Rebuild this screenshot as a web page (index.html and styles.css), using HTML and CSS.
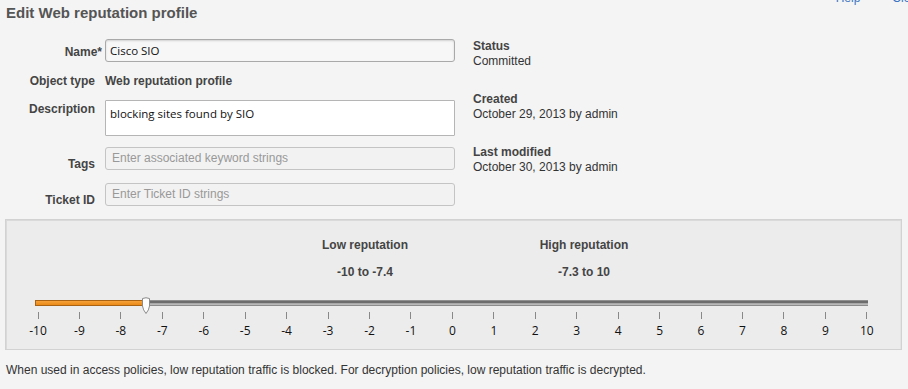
FILE: index.html
```html
<!DOCTYPE html>
<html>
<head>
<meta charset="utf-8">
<link rel="stylesheet" href="styles.css">
</head>
<body>
<div class="topbar"><a class="toplink">Help</a><a class="toplink">Close</a></div>
<h1 class="title">Edit Web reputation profile</h1>
<div class="main">
  <div class="form">
    <div class="row row-name">
      <div class="label label-name">Name*</div>
      <div class="input input-text">Cisco SIO</div>
    </div>
    <div class="row row-type">
      <div class="label">Object type</div>
      <div class="value">Web reputation profile</div>
    </div>
    <div class="row row-desc">
      <div class="label label-top">Description</div>
      <div class="input textarea input-text">blocking sites found by SIO</div>
    </div>
    <div class="row row-tags">
      <div class="label label-low">Tags</div>
      <div class="input placeholder">Enter associated keyword strings</div>
    </div>
    <div class="row row-ticket">
      <div class="label label-low">Ticket ID</div>
      <div class="input placeholder">Enter Ticket ID strings</div>
    </div>
  </div>
  <div class="meta">
    <div class="meta-group"><div class="meta-key">Status</div><div class="meta-val">Committed</div></div>
    <div class="meta-group"><div class="meta-key">Created</div><div class="meta-val">October 29, 2013 by admin</div></div>
    <div class="meta-group"><div class="meta-key">Last modified</div><div class="meta-val">October 30, 2013 by admin</div></div>
  </div>
</div>
<div class="panel">
  <div class="ranges">
    <div class="range"><div class="range-title">Low reputation</div><div class="range-val">-10 to -7.4</div></div>
    <div class="range"><div class="range-title">High reputation</div><div class="range-val">-7.3 to 10</div></div>
  </div>
  <div class="slider">
    <div class="track"><div class="fill"></div>
      <svg class="thumb" width="14" height="17" viewBox="0 0 14 17"><path d="M3.5 1.5 Q7 0 10.5 1.5 L10.5 9 Q10 13 7 16.5 Q4 13 3.5 9 Z" fill="#fdfdfd" stroke="#8a8a8a" stroke-width="1"/></svg>
    </div>
  </div>
  <div class="ticks">
    <div class="tick"><span class="mark"></span><span class="num">-10</span></div>
    <div class="tick"><span class="mark"></span><span class="num">-9</span></div>
    <div class="tick"><span class="mark"></span><span class="num">-8</span></div>
    <div class="tick"><span class="mark"></span><span class="num">-7</span></div>
    <div class="tick"><span class="mark"></span><span class="num">-6</span></div>
    <div class="tick"><span class="mark"></span><span class="num">-5</span></div>
    <div class="tick"><span class="mark"></span><span class="num">-4</span></div>
    <div class="tick"><span class="mark"></span><span class="num">-3</span></div>
    <div class="tick"><span class="mark"></span><span class="num">-2</span></div>
    <div class="tick"><span class="mark"></span><span class="num">-1</span></div>
    <div class="tick"><span class="mark"></span><span class="num">0</span></div>
    <div class="tick"><span class="mark"></span><span class="num">1</span></div>
    <div class="tick"><span class="mark"></span><span class="num">2</span></div>
    <div class="tick"><span class="mark"></span><span class="num">3</span></div>
    <div class="tick"><span class="mark"></span><span class="num">4</span></div>
    <div class="tick"><span class="mark"></span><span class="num">5</span></div>
    <div class="tick"><span class="mark"></span><span class="num">6</span></div>
    <div class="tick"><span class="mark"></span><span class="num">7</span></div>
    <div class="tick"><span class="mark"></span><span class="num">8</span></div>
    <div class="tick"><span class="mark"></span><span class="num">9</span></div>
    <div class="tick"><span class="mark"></span><span class="num">10</span></div>
  </div>
</div>
<p class="footer">When used in access policies, low reputation traffic is blocked. For decryption policies, low reputation traffic is decrypted.</p>
</body>
</html>
```
FILE: styles.css
```css
html, body {
  margin: 0;
  padding: 0;
  background: #f4f4f4;
  font-family: "Liberation Sans", Arial, sans-serif;
  font-size: 12px;
  color: #333;
  overflow: hidden;
}
.topbar {
  height: 14px;
  margin-top: -9px;
  display: flex;
  justify-content: flex-end;
  gap: 32px;
  margin-right: -15px;
}
.toplink {
  color: #3a76c4;
  font-size: 12px;
  line-height: 14px;
}
.title {
  margin: -1px 0 0 0;
  padding-left: 6px;
  font-size: 15px;
  line-height: 18px;
  font-weight: bold;
  color: #555;
  height: 18px;
}
.main {
  display: flex;
  margin-top: 17px;
}
.form {
  width: 455px;
}
.row {
  display: grid;
  grid-template-columns: 95px 350px;
  column-gap: 10px;
}
.label {
  text-align: right;
  font-weight: bold;
  color: #444;
  line-height: 14px;
  align-self: center;
  white-space: nowrap;
}
.label-name { margin-right: -7px; padding-top: 3px; }
.label-top { align-self: start; padding-top: 2px; }
.label-low { align-self: end; margin-bottom: -1px; }
.value {
  font-weight: bold;
  color: #444;
  line-height: 14px;
}
.input {
  box-sizing: border-box;
  height: 23px;
  border: 1px solid #a9a9a9;
  border-radius: 3px;
  background: #f7f7f7;
  box-shadow: inset 0 1px 2px rgba(0,0,0,0.15);
  padding: 3px 6px 0 6px;
  line-height: 15px;
}
.input-text {
  font-family: "Open Sans", "DejaVu Sans", sans-serif;
  font-size: 11.5px;
  color: #111;
  padding-left: 4px;
}
.textarea {
  height: 36px;
  background: #fff;
  border-radius: 1px;
  box-shadow: none;
  border-color: #b5b5b5;
  padding-top: 5px;
}
.placeholder {
  color: #999;
  font-size: 12px;
  background: #f2f2f2;
  border-color: #c4c4c4;
  box-shadow: none;
}
.row-type { margin-top: 12px; }
.row-desc { margin-top: 12px; }
.row-tags { margin-top: 11px; }
.row-ticket { margin-top: 13px; }
.meta {
  margin-left: 18px;
  margin-top: 0px;
}
.meta-group {
  margin-bottom: 23px;
}
.meta-key {
  font-weight: bold;
  color: #444;
  line-height: 15px;
}
.meta-val {
  color: #333;
  line-height: 15px;
}
.panel {
  box-sizing: border-box;
  margin: 13px 0 0 5px;
  width: 897px;
  height: 131px;
  background: #ececec;
  border: 1px solid #d2d2d2;
  box-shadow: inset 1px 1px 0 #dadada, inset -1px 0 0 #e4e4e4;
  padding-top: 18px;
  position: relative;
}
.ranges {
  display: flex;
  padding-left: 279px;
  gap: 59px;
}
.range {
  width: 160px;
  text-align: center;
  font-weight: bold;
  color: #444;
}
.range-title { line-height: 14px; }
.range-val { line-height: 14px; margin-top: 13px; }
.slider {
  margin-top: 21px;
  padding-left: 29px;
}
.track {
  position: relative;
  width: 833px;
  height: 6px;
  box-sizing: border-box;
  background: linear-gradient(#8f8f8f 0, #8f8f8f 1px, #6d6d6d 1px, #6d6d6d 3px, #a8a8a8 3px, #a8a8a8 4px, #b9b9b9 4px, #b9b9b9 5px, #8c8c8c 5px);
}
.fill {
  position: absolute;
  left: 0;
  top: 0;
  width: 111px;
  height: 6px;
  box-sizing: border-box;
  border: 1px solid #a96312;
  background: linear-gradient(#f6a23a, #ea8a16);
}
.thumb {
  position: absolute;
  left: 104px;
  top: -3px;
}
.ticks {
  display: flex;
  justify-content: space-between;
  margin-left: 17px;
  width: 859px;
  margin-top: 6px;
}
.tick {
  width: 30px;
  display: flex;
  flex-direction: column;
  align-items: center;
}
.mark {
  width: 1px;
  height: 7px;
  background: #888;
}
.num {
  font-family: "Open Sans", "DejaVu Sans", sans-serif;
  font-size: 12px;
  color: #111;
  line-height: 14px;
  margin-top: 5px;
}
.footer {
  margin: 13px 0 0 6px;
  line-height: 14px;
  color: #333;
}
```
